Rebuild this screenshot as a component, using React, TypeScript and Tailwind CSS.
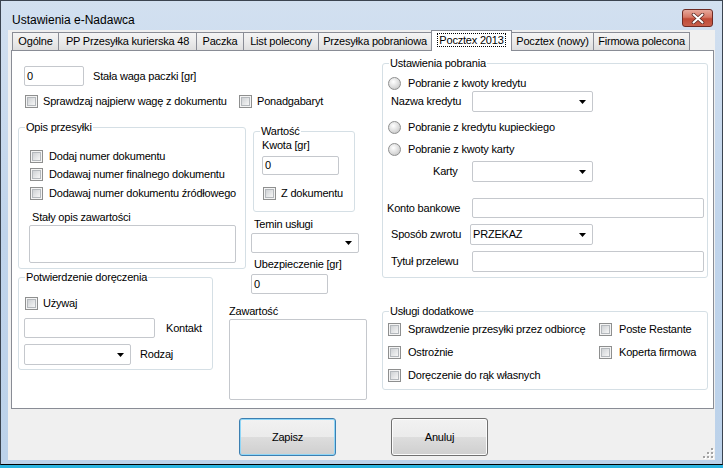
import React from "react";

function Check({ label, gap = 5, className = "" }: { label?: string; gap?: number; className?: string }) {
  return (
    <div className={`flex items-center h-[13px] ${className}`}>
      <span className="relative w-[13px] h-[13px] shrink-0 border border-[#8e8f8f] bg-[#f4f4f4]">
        <span className="absolute inset-[1px] border border-[#b4b8bc] bg-gradient-to-br from-[#cfd2d5] to-[#f6f6f6]" />
      </span>
      {label && (
        <span className={`${gap === 7 ? "ml-[7px]" : gap === 6 ? "ml-[6px]" : "ml-[5px]"} whitespace-nowrap`}>{label}</span>
      )}
    </div>
  );
}

function Radio({ label, className = "" }: { label: string; className?: string }) {
  return (
    <div className={`flex items-center h-[13px] ${className}`}>
      <span className="w-[13px] h-[13px] shrink-0 rounded-full border border-[#8e8f8f] bg-[radial-gradient(circle_at_40%_35%,#ffffff,#dcdcdc_55%,#b9b9b9)]" />
      <span className="ml-[7px] whitespace-nowrap">{label}</span>
    </div>
  );
}

function TextBox({ value = "", className = "" }: { value?: string; className?: string }) {
  return (
    <div className={`flex items-center bg-white border border-[#c5c8cd] rounded-[2px] pl-[2px] ${className}`}>
      {value}
    </div>
  );
}

function Combo({ value = "", className = "" }: { value?: string; className?: string }) {
  return (
    <div className={`relative flex items-center bg-white border border-[#c5c8cd] rounded-[2px] pl-[2px] ${className}`}>
      {value}
      <svg className="absolute right-[6px] top-1/2 -translate-y-1/2" width="7" height="4" viewBox="0 0 7 4">
        <path d="M0 0h7L3.5 4z" fill="#000" />
      </svg>
    </div>
  );
}

function Group({ title, className = "", children }: { title: string; className?: string; children?: React.ReactNode }) {
  return (
    <div className={`relative border border-[#d5dfe5] rounded-[3px] ${className}`}>
      <span className="absolute -top-[7px] left-[6px] bg-white px-[1px] leading-[13px] whitespace-nowrap">{title}</span>
      {children}
    </div>
  );
}

const tabs: { label: string; cls: string }[] = [
  { label: "Ogólne", cls: "w-[46px] border-l" },
  { label: "PP Przesyłka kurierska 48", cls: "w-[138px] border-l" },
  { label: "Paczka", cls: "w-[47px] border-l" },
  { label: "List polecony", cls: "w-[75px] border-l" },
  { label: "Przesyłka pobraniowa", cls: "w-[113px] border-l" },
];

const tabsAfter: { label: string; cls: string }[] = [
  { label: "Pocztex (nowy)", cls: "w-[81px]" },
  { label: "Firmowa polecona", cls: "w-[97px] border-l border-r" },
];

function Tab({ label, cls }: { label: string; cls: string }) {
  return (
    <div
      className={`h-[18px] flex items-center justify-center border-t border-[#898c95] bg-gradient-to-b from-[#f4f4f4] via-[#ebebeb] to-[#dedede] whitespace-nowrap ${cls}`}
    >
      {label}
    </div>
  );
}

export default function App() {
  return (
    <div className="w-[723px] h-[468px] bg-[#2bb4e0] font-['Liberation_Sans',Arial,sans-serif] text-[11px] leading-[13px] tracking-[-0.2px] text-black">
      <div className="h-[465px] flex flex-col border border-[#3b4450] border-b-black bg-gradient-to-b from-[#d2e0f0] via-[#c0d4eb] to-[#bcd2ea] px-[7px] pb-[4px]">
        {/* title bar */}
        <div className="h-[29px] flex items-start shrink-0">
          <span className="ml-[4px] mt-[12px] text-[12px] leading-[14px] tracking-normal">Ustawienia e-Nadawca</span>
          <div className="ml-auto mr-[2px] mt-[8px] w-[31px] h-[18px] rounded-[3px] border border-[#6e2b24] bg-[linear-gradient(#e7a99c,#d67765_45%,#c04a36_55%,#c8604c)] flex items-center justify-center">
            <svg width="14" height="11" viewBox="0 0 14 11">
              <path d="M2.5 1.5L11.5 9.5M11.5 1.5L2.5 9.5" stroke="#5a2a24" strokeWidth="3.6" strokeLinecap="round" />
              <path d="M2.5 1.5L11.5 9.5M11.5 1.5L2.5 9.5" stroke="#ffffff" strokeWidth="2" strokeLinecap="round" />
            </svg>
          </div>
        </div>

        {/* client area */}
        <div className="relative flex-1 bg-[#f0f0f0] flex flex-col">
          <div className="ml-[3px] w-[703px] flex flex-col">
            {/* tab strip */}
            <div className="h-[20px] flex items-end pl-[1px]">
              {tabs.map((t) => (
                <Tab key={t.label} label={t.label} cls={t.cls} />
              ))}
              <div className="relative z-10 -mb-[1px] w-[81px] h-[21px] pb-[2px] flex items-center justify-center border-l border-t border-r border-[#898c95] bg-white">
                <span className="px-[1px] outline outline-1 outline-dotted outline-black leading-[12px]">Pocztex 2013</span>
              </div>
              {tabsAfter.map((t) => (
                <Tab key={t.label} label={t.label} cls={t.cls} />
              ))}
            </div>

            {/* tab page */}
            <div className="h-[359px] border border-[#898c95] bg-white flex">
              {/* left column */}
              <div className="ml-[6px] w-[349px] flex flex-col">
                <div className="mt-[15px] h-[20px] flex items-center">
                  <TextBox value="0" className="ml-[6px] w-[60px] h-[20px]" />
                  <span className="ml-[9px]">Stała waga paczki [gr]</span>
                </div>
                <div className="mt-[9px] flex">
                  <Check label="Sprawdzaj najpierw wagę z dokumentu" className="ml-[7px] w-[214px]" />
                  <Check label="Ponadgabaryt" />
                </div>

                <div className="flex">
                  <div className="w-[228px] flex flex-col">
                    <Group title="Opis przesyłki" className="mt-[19px] h-[142px] pt-[22px] pl-[11px]">
                      <Check label="Dodaj numer dokumentu" gap={6} />
                      <Check label="Dodawaj numer finalnego dokumentu" gap={6} className="mt-[5px]" />
                      <Check label="Dodawaj numer dokumentu źródłowego" gap={6} className="mt-[6px]" />
                      <div className="mt-[11px] ml-[2px]">Stały opis zawartości</div>
                      <div className="mt-[1px] -ml-[1px] w-[207px] h-[38px] bg-white border border-[#c5c8cd] rounded-[2px]" />
                    </Group>

                    <Group title="Potwierdzenie doręczenia" className="mt-[8px] w-[195px] h-[93px] pt-[19px] pl-[6px]">
                      <Check label="Używaj" />
                      <div className="mt-[8px] flex items-center">
                        <TextBox className="-ml-[1px] w-[131px] h-[20px]" />
                        <span className="ml-[11px]">Kontakt</span>
                      </div>
                      <div className="mt-[6px] flex items-center">
                        <Combo className="-ml-[1px] w-[107px] h-[21px]" />
                        <span className="ml-[9px]">Rodzaj</span>
                      </div>
                    </Group>
                  </div>

                  <div className="ml-[5px] w-[116px] flex flex-col">
                    <Group title="Wartość" className="mt-[23px] ml-[2px] w-[102px] h-[81px] pt-[7px] pl-[8px]">
                      <div>Kwota [gr]</div>
                      <TextBox value="0" className="mt-[4px] w-[77px] h-[19px]" />
                      <Check label="Z dokumentu" className="mt-[12px] ml-[1px]" />
                    </Group>
                    <div className="mt-[6px] ml-[3px]">Temin usługi</div>
                    <Combo className="mt-[2px] w-[108px] h-[20px]" />
                    <div className="mt-[5px] ml-[3px]">Ubezpieczenie [gr]</div>
                    <TextBox value="0" className="mt-[3px] w-[77px] h-[20px]" />
                    <div className="mt-[11px] -ml-[22px]">Zawartość</div>
                    <div className="mt-[1px] -ml-[22px] w-[138px] h-[81px] bg-white border border-[#c5c8cd] rounded-[2px]" />
                  </div>
                </div>
              </div>

              {/* right column */}
              <div className="ml-[15px] w-[326px] flex flex-col">
                <Group title="Ustawienia pobrania" className="mt-[12px] h-[215px] pt-[13px] pl-[5px]">
                  <Radio label="Pobranie z kwoty kredytu" />
                  <div className="mt-[1px] h-[21px] flex items-center">
                    <span className="w-[84px] pl-[3px]">Nazwa kredytu</span>
                    <Combo className="w-[121px] h-[21px]" />
                  </div>
                  <Radio label="Pobranie z kredytu kupieckiego" className="mt-[9px]" />
                  <Radio label="Pobranie z kwoty karty" className="mt-[9px]" />
                  <div className="mt-[5px] h-[21px] flex items-center">
                    <span className="w-[84px] pl-[45px]">Karty</span>
                    <Combo className="w-[121px] h-[21px]" />
                  </div>
                  <div className="mt-[16px] h-[20px] flex items-center">
                    <span className="-ml-[1px] w-[85px] whitespace-nowrap">Konto bankowe</span>
                    <TextBox className="w-[232px] h-[20px]" />
                  </div>
                  <div className="mt-[6px] h-[21px] flex items-center">
                    <span className="w-[82px] pl-[3px] whitespace-nowrap">Sposób zwrotu</span>
                    <Combo value="PRZEKAZ" className="w-[123px] h-[21px]" />
                  </div>
                  <div className="mt-[6px] h-[21px] flex items-center">
                    <span className="w-[84px] pl-[3px] whitespace-nowrap">Tytuł przelewu</span>
                    <TextBox className="w-[232px] h-[21px]" />
                  </div>
                </Group>

                <Group title="Usługi dodatkowe" className="mt-[33px] h-[79px] pt-[11px] pl-[5px]">
                  <div className="grid grid-cols-[211px_auto] gap-y-[10px]">
                    <Check label="Sprawdzenie przesyłki przez odbiorcę" gap={7} />
                    <Check label="Poste Restante" gap={7} />
                    <Check label="Ostrożnie" gap={7} />
                    <Check label="Koperta firmowa" gap={7} />
                    <Check label="Doręczenie do rąk własnych" gap={7} />
                  </div>
                </Group>
              </div>
            </div>
          </div>

          {/* buttons */}
          <div className="mt-[9px] flex">
            <button className="ml-[231px] w-[97px] h-[38px] rounded-[3px] border border-[#3c7fb1] shadow-[inset_0_0_0_1px_#8fd6f7] bg-[linear-gradient(#f2f2f2,#ebebeb_50%,#dddddd_50%,#cfcfcf)] text-[11px]">
              Zapisz
            </button>
            <button className="ml-[55px] w-[97px] h-[38px] rounded-[3px] border border-[#707070] shadow-[inset_0_0_0_1px_#fcfcfc] bg-[linear-gradient(#f2f2f2,#ebebeb_50%,#dddddd_50%,#cfcfcf)] text-[11px]">
              Anuluj
            </button>
          </div>

          {/* size grip */}
          <svg className="absolute right-[1px] bottom-[1px]" width="11" height="11" viewBox="0 0 11 11">
            {[
              [8, 0],
              [4, 4],
              [8, 4],
              [0, 8],
              [4, 8],
              [8, 8],
            ].map(([x, y]) => (
              <g key={`${x}-${y}`}>
                <rect x={x + 1} y={y + 1} width="2" height="2" fill="#ffffff" />
                <rect x={x} y={y} width="2" height="2" fill="#a3a3a3" />
              </g>
            ))}
          </svg>
        </div>
      </div>
    </div>
  );
}
